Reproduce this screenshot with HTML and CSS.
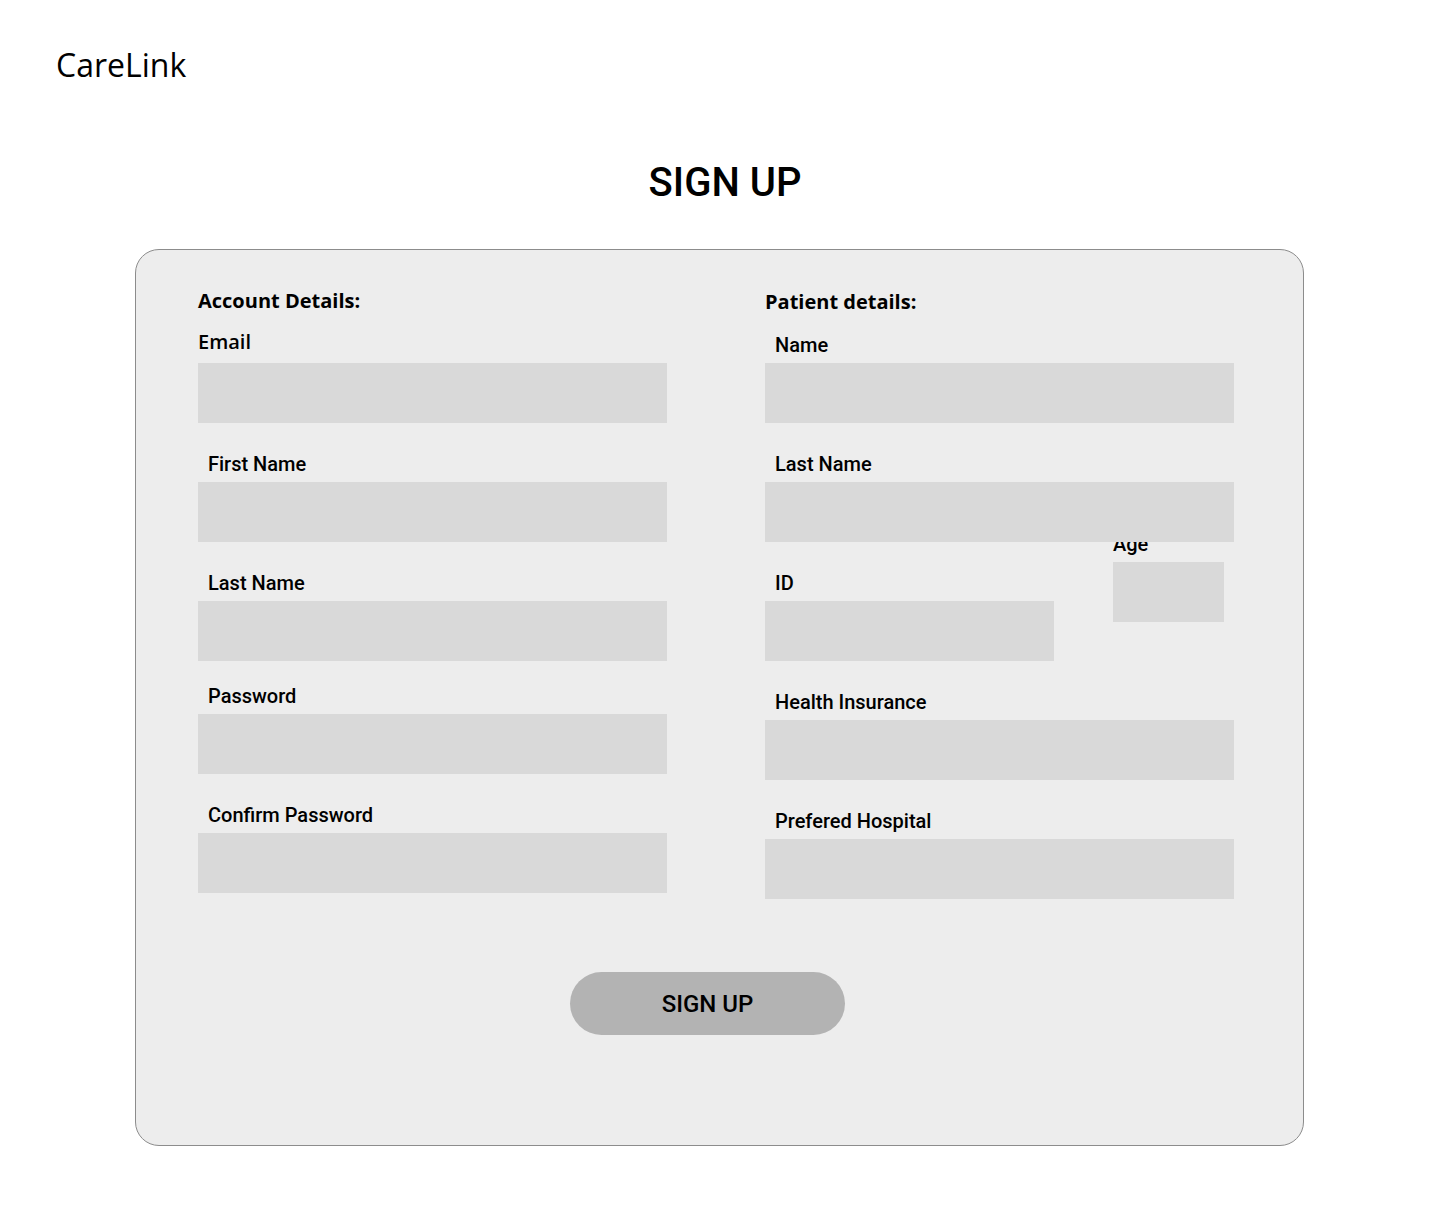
FILE: index.html
```html
<!DOCTYPE html>
<html lang="en">
<head>
<meta charset="utf-8">
<title>CareLink - Sign Up</title>
<link rel="stylesheet" href="styles.css">
</head>
<body>
<header class="topbar">
  <div class="logo">CareLink</div>
</header>
<h1 class="page-title">SIGN UP</h1>
<main class="card">
  <div class="columns">
    <section class="col">
      <h2 class="section-title">Account Details:</h2>
      <div class="field f-first">
        <label class="label label-flush label-os">Email</label>
        <div class="input input-gap9"></div>
      </div>
      <div class="field f-29">
        <label class="label">First Name</label>
        <div class="input"></div>
      </div>
      <div class="field f-29">
        <label class="label">Last Name</label>
        <div class="input"></div>
      </div>
      <div class="field f-23">
        <label class="label">Password</label>
        <div class="input"></div>
      </div>
      <div class="field f-29">
        <label class="label">Confirm Password</label>
        <div class="input"></div>
      </div>
    </section>
    <section class="col col-right">
      <h2 class="section-title">Patient details:</h2>
      <div class="field f-name">
        <label class="label">Name</label>
        <div class="input"></div>
      </div>
      <div class="field f-29">
        <label class="label">Last Name</label>
        <div class="input"></div>
      </div>
      <div class="row f-29">
        <div class="field field-id">
          <label class="label">ID</label>
          <div class="input"></div>
        </div>
        <div class="field field-age">
          <label class="label label-flush">Age</label>
          <div class="input"></div>
        </div>
      </div>
      <div class="field f-29">
        <label class="label">Health Insurance</label>
        <div class="input"></div>
      </div>
      <div class="field f-29">
        <label class="label">Prefered Hospital</label>
        <div class="input"></div>
      </div>
    </section>
  </div>
  <div class="actions">
    <button class="btn" type="button">SIGN UP</button>
  </div>
</main>
</body>
</html>
```

FILE: styles.css
```css
* { box-sizing: border-box; }

html, body {
  margin: 0;
  padding: 0;
  background: #ffffff;
  color: #000000;
  font-family: Roboto, "Liberation Sans", sans-serif;
}

body {
  width: 1440px;
  min-height: 1230px;
}

.topbar {
  padding: 43px 0 0 56px;
}

.logo {
  font-family: "Open Sans", "Liberation Sans", sans-serif;
  font-size: 32px;
  line-height: 44px;
  font-weight: 400;
}

.page-title {
  margin: 72px 0 0 0;
  padding-left: 10px;
  text-align: center;
  font-family: Roboto, "Liberation Sans", sans-serif;
  font-weight: 500;
  font-size: 40px;
  line-height: 48px;
}

.card {
  margin: 42px 0 0 135px;
  width: 1169px;
  height: 897px;
  background: #ededed;
  border: 1px solid #8c8c8c;
  border-radius: 24px;
  padding: 39px 0 0 62px;
}

.columns {
  display: grid;
  grid-template-columns: 469px 469px;
  column-gap: 98px;
}

.col {
  display: flex;
  flex-direction: column;
}

.col-right { padding-top: 1px; }

.section-title {
  margin: 0;
  font-family: "Open Sans", "Liberation Sans", sans-serif;
  font-weight: 700;
  font-size: 20px;
  line-height: 24px;
}

.field {
  display: flex;
  flex-direction: column;
}

.f-first { margin-top: 17px; }
.f-name { margin-top: 19px; }
.f-29 { margin-top: 29px; }
.f-23 { margin-top: 23px; }

.label {
  display: block;
  padding-left: 10px;
  font-family: Roboto, "Liberation Sans", sans-serif;
  font-weight: 500;
  font-size: 20px;
  line-height: 24px;
}

.label-flush { padding-left: 0; }

.label-os {
  font-family: "Open Sans", "Liberation Sans", sans-serif;
  font-weight: 600;
}

.input {
  position: relative;
  z-index: 1;
  margin-top: 6px;
  height: 60px;
  background: #d9d9d9;
}

.input-gap9 { margin-top: 9px; }

.row {
  display: flex;
  align-items: flex-start;
}

.field-id { width: 289px; }

.field-age {
  width: 111px;
  margin-left: 59px;
  margin-top: -39px;
}

.field-age .label { position: relative; z-index: 0; }

.actions {
  margin-top: 73px;
  padding-left: 372px;
}

.btn {
  width: 275px;
  height: 63px;
  border: none;
  border-radius: 32px;
  background: #b3b3b3;
  color: #000;
  font-family: Roboto, "Liberation Sans", sans-serif;
  font-size: 24px;
  font-weight: 500;
  padding: 0;
  cursor: pointer;
}
```
